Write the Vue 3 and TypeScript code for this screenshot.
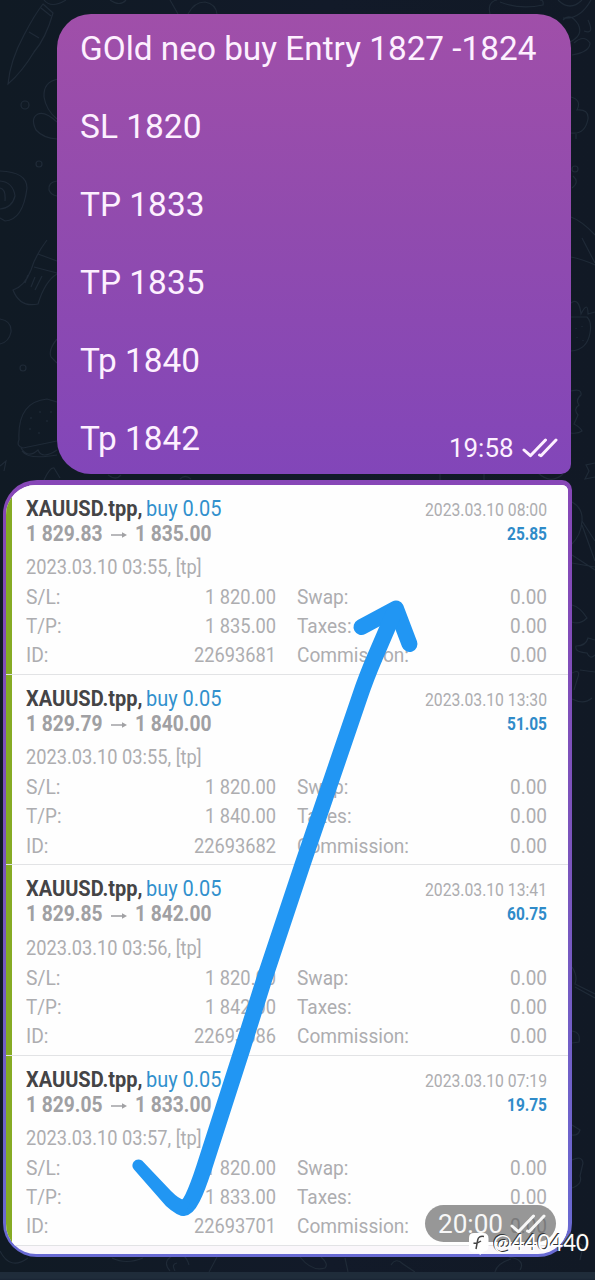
<script setup lang="ts">
import type { Directive } from 'vue'

interface Deal {
  open: string
  close: string
  closedAt: string
  profit: string
  openedAt: string
  left: [string, string, number][]
}

const lines: [string, number][] = [
  ['GOld neo buy Entry 1827 -1824', 456.5],
  ['SL 1820', 121.5],
  ['TP 1833', 124.5],
  ['TP 1835', 124.5],
  ['Tp 1840', 120],
  ['Tp 1842', 120],
]

function deal(open: string, close: string, closedAt: string, profit: string, minute: string, id: string): Deal {
  return {
    open,
    close,
    closedAt: `2023.03.10 ${closedAt}`,
    profit,
    openedAt: `2023.03.10 03:${minute}, [tp]`,
    left: [
      ['S/L:', '1 820.00', 71],
      ['T/P:', close, 71],
      ['ID:', id, 82],
    ],
  }
}

const deals: Deal[] = [
  deal('1 829.83', '1 835.00', '08:00', '25.85', '55', '22693681'),
  deal('1 829.79', '1 840.00', '13:30', '51.05', '55', '22693682'),
  deal('1 829.85', '1 842.00', '13:41', '60.75', '56', '22693686'),
  deal('1 829.05', '1 833.00', '07:19', '19.75', '57', '22693701'),
]

const leftWidths = [34.5, 35.5, 22.5]
const fees: [string, number][] = [
  ['Swap:', 51.5],
  ['Taxes:', 54.5],
  ['Commission:', 112],
]

// Condenses a text run horizontally so that it spans the given width.
const vFit: Directive<HTMLElement, number> = {
  mounted(el, { value }) {
    const natural = el.getBoundingClientRect().width
    if (natural > 0) {
      el.style.transform = `scaleX(${value / natural})`
      el.style.marginRight = `${value - natural}px`
    }
  },
}
</script>

<template>
  <main class="chat">
    <svg class="doodles" viewBox="0 0 595 1280" aria-hidden="true">
      <path d="M43 4 L53 13 Q46 38 34 52 Q22 72 8 84 Q10 61 24 35 Q35 14 43 4Z M29 32 L39 38 M41 8 L51 16 M44 0 Q51 9 66 0 M110 0 Q120 7 126 0 M170 0 L178 14 M188 14 Q194 2 205 2 Q216 4 217 14" />
      <circle cx="25" cy="105" r="4" /><circle cx="39" cy="164" r="3" /><circle cx="23" cy="368" r="3" />
      <path d="M58 79 Q43 82 44 97 Q46 110 57 119 M57 139 Q43 138 36 130 Q30 118 38 114 Q45 111 57 122 M57 181 Q48 182 49 190 Q51 195 57 196" />
      <path d="M0 171 Q27 172 27 188 Q23 220 5 221 L0 218 M0 181 Q13 182 15 196 Q12 208 0 209 M0 188 Q6 189 5 201" />
      <path d="M47 240 Q35 256 31 270 Q25 286 13 290 Q20 308 38 304 Q45 281 57 274 M38 254 L57 261 M34 267 L57 273 M28 275 L25 283 M35 277 L31 287 M42 276 L35 290" />
      <path d="M0 319 Q12 321 11 332 Q9 342 0 344 M57 339 Q48 350 51 357 L57 363 M19 440 Q17 402 47 399 L57 402 M19 440 Q16 446 23 448 L57 441 M21 448 Q28 459 38 450 Q42 460 57 450 M22 451 Q28 460 57 455" />
      <path d="M31 417 v2 M40 411 v2 M47 420 v2 M30 428 v2 M39 432 v2 M51 411 v2 M0 466 L6 461 L4 471 M44 480 Q50 467 54 468 L60 478" />
      <path d="M490 14 Q487 2 497 0 M500 2 Q520 10 543 5 Q544 0 540 0 M558 0 Q570 12 582 0 M563 18 Q580 20 591 0 M570 42 Q584 35 578 24 Q570 12 563 20 M584 31 Q595 35 588 20 M572 55 Q590 52 590 43 Q584 34 574 43" />
      <path d="M571 97 Q582 100 577 110 Q589 109 588 119 Q585 135 571 133 M576 134 v5 M571 217 Q582 221 595 235 M571 257 Q582 259 595 265 M582 238 L595 263" />
      <circle cx="575" cy="169" r="3" /><path d="M572 188 Q580 182 573 176 M571 303 Q579 297 581 314 Q588 300 588 314 L595 312 M571 351 Q587 350 590 333 Q592 322 587 317 L571 317 M576 328 v1 M582 326 v1 M577 337 v1 M583 340 v1 M571 391 Q582 388 581 395 Q575 400 579 405 Q573 409 578 415 L574 424 Q581 428 582 431 Q578 434 571 433 M595 463 L586 465 L589 471 L585 479 L595 477" />
      <path d="M572 502 Q583 508 582 521 Q581 535 572 544 M582 521 L595 541 M582 525 L595 561 M572 555 L595 570 M572 563 L595 567 M572 605 Q580 607 587 618 Q580 625 572 622 M595 640 L588 638 Q586 646 576 646 Q574 652 587 653 Q590 660 595 655 M572 673 Q582 668 577 680 L574 690 M580 670 L595 672 M572 699 Q584 705 592 698" />
      <path d="M572 967 Q578 976 575 984 L595 994 M575 987 L595 998 M572 1031 Q581 1032 579 1042 L572 1043 M572 1125 L580 1130 Q578 1136 572 1135 M572 1160 Q582 1155 583 1163 L580 1176 Q583 1184 572 1188" />
      <path d="M108 475 Q116 481 121 475 M180 479 Q185 474 191 479 M440 473 v8 M484 473 v8 M538 473 Q551 485 563 474 M0 1251 Q10 1271 28 1258 M112 1258 Q126 1265 143 1258 M170 1271 Q162 1262 172 1256 Q185 1250 189 1265 M175 1271 Q171 1264 177 1263 M209 1272 L217 1257 M300 1257 Q312 1272 325 1268 Q329 1264 321 1257 M345 1258 L348 1272 M391 1265 Q396 1257 403 1264 L415 1272 M495 1272 Q497 1263 511 1259 M509 1257 Q526 1260 520 1270 M572 1238 L583 1246 L580 1260" />
    </svg>

    <section class="bubble">
      <p v-for="([text, width]) in lines" :key="text" class="line"><span v-fit="width" class="fit">{{ text }}</span></p>
      <div class="meta">
        <span v-fit="64.5" class="fit">19:58</span>
        <svg class="ticks" viewBox="0 0 36 20"><path d="M2 12 L8.4 17.7 L23.5 2 M17.6 17 L19 17.7 L34 2" /></svg>
      </div>
    </section>

    <section class="photo">
      <div class="sheet">
        <article v-for="d in deals" :key="d.closedAt" class="deal">
          <div class="row head">
            <span class="group"><b v-fit="116.5" class="fit symbol">XAUUSD.tpp,</b><span v-fit="75.5" class="fit side">buy 0.05</span></span>
            <span v-fit="122" class="fit closed">{{ d.closedAt }}</span>
          </div>
          <div class="row prices">
            <span class="group"><b v-fit="76.5" class="fit">{{ d.open }}</b><svg class="arrow" viewBox="0 0 18 10"><path d="M1 5 H14" /><path class="tip" d="M12 2.2 L17 5 L12 7.8Z" /></svg><b v-fit="76.5" class="fit">{{ d.close }}</b></span>
            <b v-fit="40" class="fit profit">{{ d.profit }}</b>
          </div>
          <div class="row opened"><span v-fit="175.5" class="fit">{{ d.openedAt }}</span></div>
          <div v-for="([label, value, width], i) in d.left" :key="label" class="row detail">
            <span class="half"><span v-fit="leftWidths[i]" class="fit">{{ label }}</span><span v-fit="width" class="fit">{{ value }}</span></span>
            <span class="half"><span v-fit="fees[i][1]" class="fit">{{ fees[i][0] }}</span><span v-fit="37" class="fit">0.00</span></span>
          </div>
        </article>
      </div>
      <svg class="stroke" viewBox="0 0 595 1280" aria-hidden="true">
        <path class="thick" d="M361.5 627 L396 608.5 L409.5 644" />
        <path class="thick" d="M393.5 614 L375 657 Q366 678 360 696 L302 866 L264 980 L242 1050 L204 1168 Q191 1208 184 1208" />
        <path class="solid" d="M142 1160.500 Q137 1158 133.500 1162 Q131 1166 134 1169.500 L166 1206 Q177 1216 184 1216 L190 1203 L184 1200 Q179 1199 171 1191 Z" />
      </svg>
      <div class="stamp">
        <span v-fit="65" class="fit">20:00</span>
        <svg class="ticks" viewBox="0 0 36 20"><path d="M2 12 L8.400 17.700 L23.500 2 M17.600 17 L19 17.700 L34 2" /></svg>
      </div>
    </section>

    <footer class="strip"></footer>

    <div class="watermark">
      <svg class="logo" viewBox="0 0 22 24">
        <path class="plate" d="M6 1 H15 Q20.500 1 20.500 6.500 V14 Q20.500 19 16 19.500 L12 23 L10.500 20.500 H6 Q1 20.500 1 15.500 V6 Q1 1 6 1Z" />
        <path class="mark" d="M16 4.500 Q10.500 3.500 9.700 8 L8 17 M5.500 11 Q9 12 13 9" />
      </svg>
      <span v-fit="96" class="fit">@440440</span>
    </div>
  </main>
</template>

<style>
body {
  margin: 0;
  background: #111923;
}
</style>

<style scoped>
.chat {
  position: relative;
  box-sizing: border-box;
  width: 595px;
  height: 1280px;
  padding-top: 14px;
  overflow: hidden;
  display: flex;
  flex-direction: column;
  font-family: Roboto, "Liberation Sans", sans-serif;
  background: linear-gradient(90deg, #101a24 0%, #121a29 55%, #111925 100%);
}
.doodles {
  position: absolute;
  inset: 0;
  width: 595px;
  height: 1280px;
  fill: none;
  stroke: #1f2a37;
  stroke-width: 1.2;
}
.fit {
  display: inline-block;
  white-space: pre;
  transform-origin: 0 50%;
}
.bubble {
  position: relative;
  box-sizing: border-box;
  width: 513.500px;
  height: 459.500px;
  margin-left: 57px;
  padding: 15px 24px 0 23px;
  border-radius: 34px 34px 10px 34px;
  background: linear-gradient(180deg, #a04fa9 0%, #914bae 45%, #8246b9 100%);
  color: #fdf0ff;
}
.line {
  margin: 0 0 39px;
  font-size: 33.300px;
  line-height: 39px;
}
.meta {
  position: absolute;
  right: 13px;
  bottom: 10.500px;
  display: flex;
  align-items: center;
  gap: 8px;
  font-size: 25.500px;
  line-height: 30px;
}
.ticks {
  width: 36px;
  height: 20px;
  fill: none;
  stroke: #fdf0ff;
  stroke-width: 3;
  stroke-linecap: round;
  stroke-linejoin: round;
}
.photo {
  position: relative;
  box-sizing: border-box;
  width: 569.500px;
  height: 777px;
  margin: 6.500px 0 0 2.500px;
  padding: 4.500px 4px 3.500px 3.500px;
  border-radius: 34px 10px 34px 34px;
  background: linear-gradient(180deg, #8747b7 0%, #7a55bd 50%, #686ad3 100%);
}
.sheet {
  box-sizing: border-box;
  height: 769px;
  overflow: hidden;
  border-radius: 30px 6px 30px 30px;
  background: #faf7fb;
}
.deal {
  box-sizing: border-box;
  height: 190.400px;
  padding: 11px 21px 0 19.500px;
  border-bottom: 1.500px solid #e2e3e5;
  background: linear-gradient(90deg, #86ab24 0 6px, #fefefe 6px);
  color: #adadb0;
}
.row {
  display: flex;
  justify-content: space-between;
}
.group {
  display: flex;
  align-items: center;
}
.head {
  height: 25px;
  font-size: 22.500px;
  line-height: 25px;
}
.symbol {
  color: #444446;
}
.side {
  margin-left: 4px;
  color: #3190cd;
}
.closed {
  font-size: 18.800px;
  line-height: 28px;
}
.prices {
  height: 25px;
  margin-bottom: 7.500px;
  font-size: 21.300px;
  line-height: 25px;
  color: #a0a0a3;
}
.arrow {
  width: 18px;
  height: 10px;
  margin: 4px 7px 0 8px;
  fill: none;
  stroke: #a1a1a4;
  stroke-width: 1.600;
}
.tip {
  fill: #a1a1a4;
  stroke: none;
}
.profit {
  font-size: 18.500px;
  line-height: 27px;
  color: #2f8bc9;
}
.opened {
  height: 29.800px;
  font-size: 19.300px;
  line-height: 29px;
}
.detail {
  height: 29.200px;
  font-size: 19.300px;
  line-height: 29px;
}
.half {
  display: flex;
  justify-content: space-between;
  width: 250.500px;
}
.stroke {
  position: absolute;
  left: -2.500px;
  top: -480px;
  width: 595px;
  height: 1280px;
  fill: none;
  stroke: #2196f3;
  stroke-linecap: round;
  stroke-linejoin: round;
}
.thick {
  stroke-width: 16px;
}
.solid {
  fill: #2196f3;
  stroke: none;
}
.stamp {
  position: absolute;
  right: 16px;
  bottom: 15px;
  box-sizing: border-box;
  display: flex;
  align-items: center;
  gap: 7px;
  width: 131px;
  height: 37px;
  padding-left: 13px;
  border-radius: 19px;
  background: rgba(95, 95, 95, 0.65);
  color: #f7f7f7;
  font-size: 25.500px;
}
.stamp .ticks {
  stroke: #f7f7f7;
}
.strip {
  position: absolute;
  left: 0;
  bottom: 0;
  width: 595px;
  height: 8px;
  background: linear-gradient(180deg, #1f2c3a 0 6px, #192433 8px);
}
.watermark {
  position: absolute;
  left: 468px;
  top: 1227px;
  display: flex;
  align-items: center;
  gap: 3px;
  font-family: Lato, sans-serif;
  font-size: 24px;
  line-height: 28px;
  color: #fff;
  text-shadow: -1px -1px 0 #333;
}
.logo {
  width: 22px;
  height: 24px;
  margin-top: 5px;
}
.plate {
  fill: #fff;
}
.mark {
  fill: none;
  stroke: #444;
  stroke-width: 1.500;
}
</style>
